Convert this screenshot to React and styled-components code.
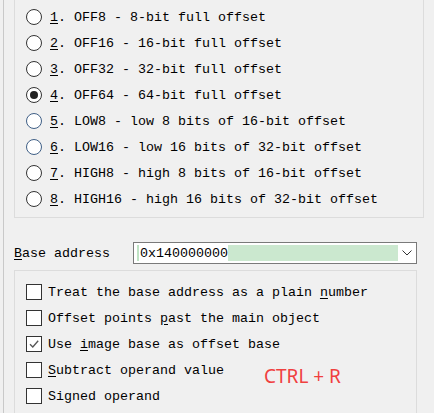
import React from "react";
import styled, { createGlobalStyle } from "styled-components";

const GlobalStyle = createGlobalStyle`
  html, body {
    margin: 0;
    padding: 0;
    background: #f0f0f0;
  }
  body {
    font-family: "Liberation Mono", "DejaVu Sans Mono", monospace;
    font-size: 13.33px;
    color: #000;
  }
`;

const Window = styled.div`
  margin-left: 3px;
  border-left: 1px solid #c9c9c9;
  height: 413px;
  padding-left: 10px;
  overflow: hidden;
  position: relative;
`;

const GroupBox = styled.div`
  box-sizing: border-box;
  width: ${(p) => p.width}px;
  border: 1px solid #dcdcdc;
  border-top: ${(p) => (p.noTop ? "none" : "1px solid #dcdcdc")};
  padding: ${(p) => p.padding};
  position: relative;
`;

const Row = styled.label`
  display: flex;
  align-items: center;
  height: 26px;
  white-space: pre;
`;

const Radio = styled.span`
  box-sizing: border-box;
  width: 16px;
  height: 16px;
  border-radius: 50%;
  border: 1px solid ${(p) => (p.tint ? "#3f5f86" : "#333")};
  background: #fff;
  margin-right: 8px;
  display: flex;
  align-items: center;
  justify-content: center;
  flex-shrink: 0;

  &::after {
    content: "";
    display: ${(p) => (p.checked ? "block" : "none")};
    width: 8px;
    height: 8px;
    border-radius: 50%;
    background: #222;
  }
`;

const Box = styled.span`
  box-sizing: border-box;
  width: 16px;
  height: 16px;
  border: 1px solid #333;
  background: #fff;
  margin-right: 6px;
  display: flex;
  align-items: center;
  justify-content: center;
  flex-shrink: 0;
`;

const Key = styled.u`
  text-decoration: underline;
  text-underline-offset: 2px;
`;

const AddressRow = styled.div`
  display: flex;
  align-items: center;
  height: 22px;
  margin: 24px 0 6px;
`;

const AddressLabel = styled.span`
  width: 119px;
  white-space: pre;
`;

const Combo = styled.div`
  box-sizing: border-box;
  width: 284px;
  height: 22px;
  border: 1px solid #7a7a7a;
  background: #fff;
  display: flex;
  align-items: center;
  padding: 0 0 0 3px;
`;

const Caret = styled.span`
  width: 2px;
  height: 16px;
  background: #bfe3c4;
  margin-right: 1px;
`;

const ComboText = styled.span`
  white-space: pre;
`;

const Highlight = styled.span`
  flex: 1;
  height: 16px;
  background: #cbe8cf;
`;

const DropButton = styled.span`
  width: 18px;
  display: flex;
  justify-content: center;
  align-items: center;
`;

const Hotkey = styled.div`
  position: absolute;
  left: 249px;
  top: 92px;
  font-family: "Noto Sans", "Liberation Sans", sans-serif;
  font-size: 19px;
  color: #f0403f;
  white-space: pre;
`;

const modes = [
  ["1", "OFF8 - 8-bit full offset"],
  ["2", "OFF16 - 16-bit full offset"],
  ["3", "OFF32 - 32-bit full offset"],
  ["4", "OFF64 - 64-bit full offset"],
  ["5", "LOW8 - low 8 bits of 16-bit offset"],
  ["6", "LOW16 - low 16 bits of 32-bit offset"],
  ["7", "HIGH8 - high 8 bits of 16-bit offset"],
  ["8", "HIGH16 - high 16 bits of 32-bit offset"],
];

const options = [
  { pre: "Treat the base address as a plain ", key: "n", post: "umber" },
  { pre: "Offset points ", key: "p", post: "ast the main object" },
  { pre: "Use ", key: "i", post: "mage base as offset base", checked: true },
  { pre: "", key: "S", post: "ubtract operand value" },
  { pre: "Signed operand", key: "", post: "" },
];

const Check = () => (
  <svg width="12" height="12" viewBox="0 0 12 12">
    <path d="M2 6.2 L4.8 9 L10.2 2.8" fill="none" stroke="#555" strokeWidth="1.3" />
  </svg>
);

const Chevron = () => (
  <svg width="10" height="6" viewBox="0 0 10 6">
    <path d="M0.5 0.5 L5 5 L9.5 0.5" fill="none" stroke="#333" strokeWidth="1" />
  </svg>
);

export default function App() {
  return (
    <>
      <GlobalStyle />
      <Window>
        <GroupBox width={410} noTop padding="4px 0 5px 11px">
          {modes.map(([num, text]) => (
            <Row key={num}>
              <Radio checked={num === "4"} tint={num === "5" || num === "6"} />
              <Key>{num}</Key>
              {". " + text}
            </Row>
          ))}
        </GroupBox>

        <AddressRow>
          <AddressLabel>
            <Key>B</Key>ase address
          </AddressLabel>
          <Combo>
            <Caret />
            <ComboText>0x140000000</ComboText>
            <Highlight />
            <DropButton>
              <Chevron />
            </DropButton>
          </Combo>
        </AddressRow>

        <GroupBox width={403} padding="8px 0 30px 11px">
          {options.map((o, i) => (
            <Row key={i}>
              <Box>{o.checked && <Check />}</Box>
              {o.pre}
              {o.key && <Key>{o.key}</Key>}
              {o.post}
            </Row>
          ))}
          <Hotkey>CTRL + R</Hotkey>
        </GroupBox>
      </Window>
    </>
  );
}
